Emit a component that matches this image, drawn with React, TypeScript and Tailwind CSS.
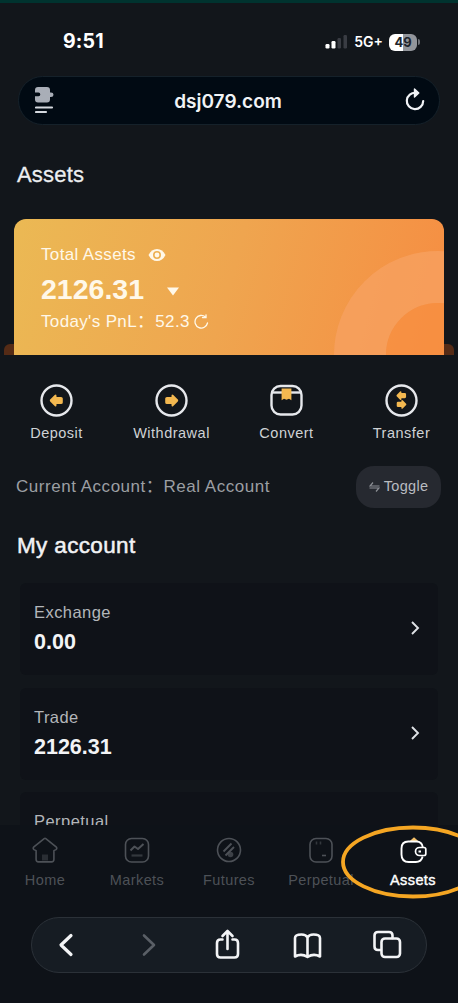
import type { ReactNode } from 'react';

interface Action {
  label: string;
  icon: ReactNode;
}

interface Account {
  name: string;
  balance?: string;
}

interface Tab {
  label: string;
  icon: ReactNode;
  active?: boolean;
}

const ARROW_LEFT = 'M9.8 16.5q0-.6.6-1.200l4.300-4.300q1.500-1.300 1.800.7v1.300h4.500q1.800 0 1.800 1.500v4q0 1.500-1.800 1.500h-4.500v1.300q-.3 2-1.800.7l-4.300-4.300q-.6-.6-.6-1.200z';

const actions: Action[] = [
  {
    label: 'Deposit',
    icon: (
      <>
        <circle cx="16.5" cy="16.5" r="15" />
        <path d={ARROW_LEFT} fill="#f3b850" stroke="none" />
      </>
    ),
  },
  {
    label: 'Withdrawal',
    icon: (
      <>
        <circle cx="16.5" cy="16.5" r="15" />
        <path d={ARROW_LEFT} fill="#f3b850" stroke="none" transform="matrix(-1 0 0 1 33 0)" />
      </>
    ),
  },
  {
    label: 'Convert',
    icon: (
      <>
        <rect x="1.5" y="2" width="30" height="28.5" rx="9" />
        <path d="M3 8.500h27" />
        <path d="M11.600 4.500h9.800v11.800l-2.400-1.600-2.500 1-2.500-1-2.400 1.600z" fill="#f3b850" stroke="none" />
      </>
    ),
  },
  {
    label: 'Transfer',
    icon: (
      <>
        <circle cx="16.5" cy="16.5" r="15" />
        <path d={ARROW_LEFT} fill="#f3b850" stroke="none" transform="translate(4.200 -.6) scale(.74)" />
        <path d={ARROW_LEFT} fill="#f3b850" stroke="none" transform="matrix(-.74 0 0 .74 28.600 8.200)" />
      </>
    ),
  },
];

const accounts: Account[] = [
  { name: 'Exchange', balance: '0.00' },
  { name: 'Trade', balance: '2126.31' },
  { name: 'Perpetual' },
];

const tabs: Tab[] = [
  {
    label: 'Home',
    icon: (
      <>
        <path d="M12.200 1.600q.8-.6 1.600 0l10.600 8.600q.9 1.400-.4 2.400l-2.100 1v9q0 2.300-2.300 2.300H6.400q-2.300 0-2.300-2.300v-9l-2.100-1q-1.300-1-.4-2.400z" />
        <path d="M10 17.500h6v6h-6z" fill="currentColor" stroke="none" opacity=".45" />
      </>
    ),
  },
  {
    label: 'Markets',
    icon: (
      <>
        <rect x="1.500" y="1.500" width="23" height="23.500" rx="6" />
        <path d="M6.500 13.500l4-4 3.500 2.500 5.500-5" strokeWidth="2" />
        <path d="M7.500 18.500h11" opacity=".6" strokeWidth="2.200" />
      </>
    ),
  },
  {
    label: 'Futures',
    icon: (
      <>
        <circle cx="13" cy="13" r="11.500" />
        <path d="M7.500 14.500l8-8M9.500 18.500l8.500-8.500" strokeWidth="1.900" />
        <circle cx="14.500" cy="17.500" r="2.800" fill="currentColor" stroke="none" opacity=".75" />
      </>
    ),
  },
  {
    label: 'Perpetual',
    icon: (
      <>
        <rect x="2" y="1.500" width="22" height="23.500" rx="6" />
        <path d="M8.500 4.500v3M12.500 4.500v3" opacity=".6" />
        <path d="M14 18.500h4" />
      </>
    ),
  },
  {
    label: 'Assets',
    active: true,
    icon: (
      <>
        <path d="M14 .2l4.500 4h-9z" fill="#f3c06a" stroke="none" />
        <path d="M22.800 10.300c-.6-3.800-2.800-5.800-6.300-5.800H8.300c-4.500 0-6.800 2.600-6.800 7v6c0 4.700 2.600 7.500 7.300 7.500h7c3.800 0 6-1.700 6.800-5.500" />
        <path d="M24 10.500h-4.500a4 4 0 0 0 0 8H24q1.800 0 1.800-1.800v-4.400q0-1.800-1.800-1.800z" strokeWidth="1.700" />
        <path d="M18.500 14.500h2.500" strokeWidth="2" />
      </>
    ),
  },
];

function StatusBar() {
  return (
    <div className="flex h-[51px] items-center justify-between pt-[27px] pl-[63px] pr-[38px] font-['Inter'] text-white">
      <span className="text-[19.5px] font-bold leading-none tracking-[0.2px]">9:51</span>
      <div className="flex items-center gap-1.5">
        <svg width="24" height="16" viewBox="0 0 24 16">
          <rect x="1.500" y="10" width="4" height="4.500" rx="1.200" fill="#fff" />
          <rect x="7.500" y="7" width="4" height="7.500" rx="1.200" fill="#fff" />
          <rect x="13.500" y="4" width="3.500" height="10.500" rx="1.200" fill="#393c43" />
          <rect x="19.500" y="1" width="3.500" height="13.500" rx="1.200" fill="#393c43" />
        </svg>
        <span className="text-[14px] font-semibold leading-none">5G+</span>
        <div className="flex items-center">
          <div className="flex h-[17px] w-[28px] items-center justify-center rounded-md bg-linear-to-r from-white from-50% to-[#92959b] to-50% text-[13px] font-bold leading-none text-[#20242b]">
            49
          </div>
          <div className="ml-px h-1.5 w-0.5 rounded-r bg-[#6e7177]" />
        </div>
      </div>
    </div>
  );
}

function AddressBar() {
  return (
    <div className="mx-[18px] mt-[22px] flex h-[49px] items-center justify-between rounded-full border border-[#15212a] bg-[#010a13] pl-4 pr-3.5">
      <svg width="20" height="28" viewBox="0 0 20 28">
        <path d="M3 0h9q3 0 3 3v2.500h1q2.500 0 2.500 2.200T16 10h-1v2.500q0 3-3 3H3q-3 0-3-3V9.200h3.500a1.800 1.800 0 0 0 0-3.600H0V3q0-3 3-3z" fill="#a9aeb7" />
        <path d="M1 20.500h16M1 25h10" stroke="#d5d9df" strokeWidth="2.200" strokeLinecap="round" />
      </svg>
      <span className="mr-1 mt-px font-['Inter'] text-[19px] font-semibold leading-none text-[#f1f3f6]">dsj079.com</span>
      <svg className="-mt-1" width="20" height="24" viewBox="0 0 20 24" fill="none" stroke="#f1f3f6" strokeWidth="2.200" strokeLinecap="round" strokeLinejoin="round">
        <path d="M11 5.800A8.200 8.200 0 1 0 18.200 14" />
        <path d="M9.500 2l4.300 4.100-4.300 4z" fill="#f1f3f6" strokeWidth="1.400" />
      </svg>
    </div>
  );
}

function BalanceCard() {
  return (
    <div className="relative mt-[30px] flex h-[136px] justify-center">
      {/* Tray that the card slides out of */}
      <div className="absolute bottom-0 left-[4px] h-[11px] w-[450px] rounded-t-md bg-[#552b16]" />
      <div className="relative w-[430px] overflow-hidden rounded-t-xl bg-linear-[105deg] from-[#ebb954] via-[#efa54f] to-[#f68d42] pl-[27px] pt-[25.500px] text-[#fff8e9]">
        <svg className="absolute bottom-0 right-0" width="112" height="108" viewBox="0 0 112 108">
          <circle cx="106" cy="108" r="78" fill="none" stroke="#f7a262" strokeOpacity=".75" strokeWidth="52" />
          <circle cx="106" cy="108" r="52" fill="#f99041" fillOpacity=".6" />
        </svg>
        <div className="relative flex h-5 items-center gap-3 text-[17px] tracking-[0.35px]">
          Total Assets
          <svg width="18" height="14" viewBox="0 0 18 14">
            <path d="M0.500 7Q3.500 1 9 1t8.500 6Q14.500 13 9 13T.5 7z" fill="currentColor" />
            <circle cx="9" cy="7" r="3.200" fill="#fff8e9" stroke="#edb052" strokeWidth="1.600" />
          </svg>
        </div>
        <div className="relative mt-[7.500px] flex h-[34px] items-center gap-[22px] text-[28.500px] font-bold leading-none">
          2126.31
          <svg className="mt-1" width="14" height="9" viewBox="0 0 14 9">
            <path d="M1 .5h12L7 8.500z" fill="currentColor" />
          </svg>
        </div>
        <div className="relative mt-[6px] flex h-5 items-center text-[17px] tracking-[0.35px]">
          <span className="whitespace-pre">Today's PnL：</span>
          <span className="ml-px">52.3</span>
          <svg className="ml-1" width="15" height="16" viewBox="0 0 15 16" fill="none" stroke="currentColor" strokeWidth="1.300" strokeLinecap="round">
            <path d="M11.500 3A6.300 6.300 0 1 0 13.500 9" />
            <path d="M8.500 3.500h3.500V.8" />
          </svg>
        </div>
      </div>
    </div>
  );
}

function AccountRow({ name, balance }: Account) {
  return (
    <div className="flex h-[92px] shrink-0 justify-between rounded-md bg-[#0f1218] pt-[19px] pl-[14px] pr-[18px]">
      <div>
        <p className="text-[16.500px] leading-5 tracking-[0.45px] text-[#b3b6ba]">{name}</p>
        {balance && <p className="mt-2 text-[21.500px] font-bold leading-6 text-[#f3f4f6]">{balance}</p>}
      </div>
      {balance && (
        <svg className="mt-[19px]" width="10" height="14" viewBox="0 0 10 14" fill="none" stroke="#dfe2e6" strokeWidth="1.900">
          <path d="M2 1l6 6-6 6" />
        </svg>
      )}
    </div>
  );
}

function TabBar() {
  return (
    <nav className="relative flex h-[76px] pt-3">
      {tabs.map((tab) => (
        <div
          key={tab.label}
          className={`-ml-px mr-px flex w-[92px] shrink-0 flex-col items-center ${
            tab.active ? 'text-white [-webkit-text-stroke:0.4px_white]' : 'text-[#4d5157]'
          }`}
        >
          <svg width="27" height="27" viewBox="0 0 27 27" fill="none" stroke="currentColor" strokeWidth={tab.active ? 1.9 : 1.6} strokeLinejoin="round">
            {tab.icon}
          </svg>
          <span className="mt-1.5 text-[14.500px] leading-5 tracking-[0.4px]">{tab.label}</span>
        </div>
      ))}
      {/* Highlight ring around the active tab */}
      <svg className="absolute left-[340px] top-[-1px]" width="118" height="76" viewBox="0 0 118 76" fill="none">
        <ellipse cx="73" cy="38" rx="70" ry="34.500" stroke="#f5a623" strokeWidth="3.800" />
      </svg>
    </nav>
  );
}

function BrowserToolbar() {
  return (
    <div className="mx-[31px] mt-[15.500px] flex h-[56px] items-center rounded-full border border-[#2b3138] bg-[#161c23]">
      <svg width="394" height="54" viewBox="0 0 394 54" fill="none" stroke="#f3f4f6" strokeWidth="2.600" strokeLinecap="round" strokeLinejoin="round">
        <path d="M39 17.500L29 27l10 9.500" strokeWidth="3.200" />
        <path d="M112 17.500l10 9.500-10 9.500" stroke="#5a5f66" />
        <path d="M190.500 21.500h-2q-3.500 0-3.500 3.500v11q0 3.500 3.500 3.500h14q3.500 0 3.500-3.500V25q0-3.500-3.500-3.500h-2" />
        <path d="M195.500 31V14M190.500 18l5-5 5 5" />
        <path d="M275.500 19.500v18.500M275.500 19.500q-1.500-3-6-3-6.500 0-6.500 3.500v18.500q6.500-3.500 12.500.5 6-4 12.500-.5V20q0-3.500-6.500-3.500-4.500 0-6 3z" />
        <path d="M348.500 32H346q-3.500 0-3.500-3.500v-11q0-3.500 3.500-3.500h11q3.500 0 3.500 3.500V20" />
        <rect x="349.500" y="20.500" width="18.500" height="18.500" rx="3.500" />
      </svg>
    </div>
  );
}

export default function App() {
  return (
    <div className="flex h-[1003px] w-[458px] flex-col overflow-hidden border-t-[3px] border-[#00332f] bg-[#12161b] font-['Liberation_Sans','Noto_Sans_CJK_SC',sans-serif]">
      <StatusBar />
      <AddressBar />

      <h1 className="mt-[36px] pl-[17px] text-[22px] leading-7 tracking-[0.2px] text-[#eceef0] [-webkit-text-stroke:0.3px_#eceef0]">
        Assets
      </h1>

      <BalanceCard />

      <div className="mt-[29px] flex h-[60px] shrink-0">
        {actions.map((action) => (
          <div key={action.label} className="-ml-px mr-px flex w-[115px] shrink-0 flex-col items-center text-[#cfd2d5]">
            <svg width="33" height="33" viewBox="0 0 33 33" fill="none" stroke="#e6e8ec" strokeWidth="2.400">
              {action.icon}
            </svg>
            <span className="mt-1.5 text-[14.500px] leading-5 tracking-[0.5px]">{action.label}</span>
          </div>
        ))}
      </div>

      <div className="mt-[22px] flex h-[42px] shrink-0 items-center justify-between pl-[16px] pr-[17px]">
        <p className="text-[17px] tracking-[0.53px] text-[#9c9fa3]">Current Account：Real Account</p>
        <button className="flex h-[42px] w-[85px] items-center justify-center gap-1 rounded-[18px] bg-[#262930] text-[14.500px] tracking-[0.3px] text-[#b9bcc0]">
          <svg width="11" height="10" viewBox="0 0 11 10" fill="none" stroke="#8b8f95" strokeWidth="1.200">
            <path d="M4 .5L1 4h9.500M7 9.500L10 6H.5" />
          </svg>
          Toggle
        </button>
      </div>

      <h2 className="mt-[24px] pl-[17px] text-[22.500px] leading-7 tracking-[0.35px] text-[#f1f2f4] [-webkit-text-stroke:0.5px_#f1f2f4]">
        My account
      </h2>

      <div className="mx-5 mt-[23px] flex h-[242px] shrink-0 flex-col gap-[12.500px] overflow-hidden">
        {accounts.map((account) => (
          <AccountRow key={account.name} {...account} />
        ))}
      </div>

      <div className="grow bg-[#0e1218]">
        <TabBar />
        <BrowserToolbar />
      </div>
    </div>
  );
}
